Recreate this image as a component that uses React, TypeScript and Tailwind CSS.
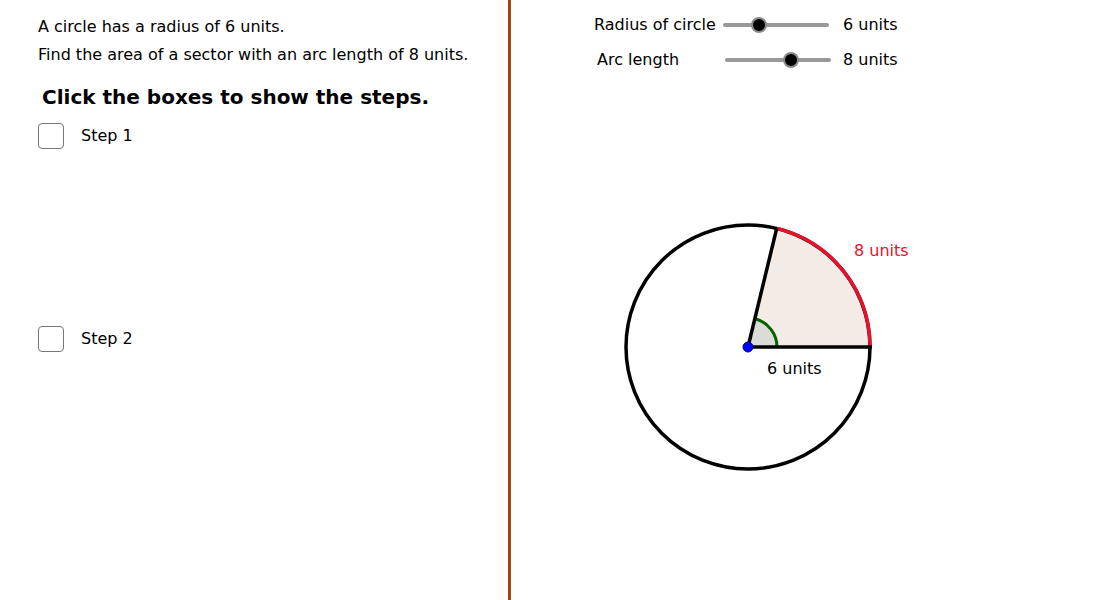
import React from "react";

const font = { fontFamily: '"DejaVu Sans", "Open Sans", sans-serif' };

function Slider({ pos }: { pos: number }) {
  return (
    <div className="relative w-[106px] h-[16px]">
      <div className="absolute left-0 right-0 top-[6px] h-[4px] rounded-full bg-[#999999]" />
      <div
        className="absolute top-[0px] w-[16px] h-[16px] rounded-full bg-black border-[2px] border-[#8a8a8a]"
        style={{ left: pos - 8 }}
      />
    </div>
  );
}

function Checkbox() {
  return <div className="w-[26px] h-[26px] rounded-[4px] border-[1.5px] border-[#777777] bg-white" />;
}

export default function App() {
  const cx = 749 - 512;
  const cy = 347;
  const r = 122;
  const theta = 8 / 6;
  const ex = cx + r * Math.cos(theta);
  const ey = cy - r * Math.sin(theta);
  const ar = 29;
  const ax = cx + ar * Math.cos(theta);
  const ay = cy - ar * Math.sin(theta);
  return (
    <div className="w-[1100px] h-[600px] bg-white flex text-black overflow-hidden" style={font}>
      <div className="w-[508px] h-full pl-[38px] pt-[13px] flex flex-col">
        <div className="text-[16px] leading-[28px]">A circle has a radius of 6 units.</div>
        <div className="text-[16px] leading-[28px]">Find the area of a sector with an arc length of 8 units.</div>
        <div className="text-[20px] font-bold leading-[28px] mt-[14px] pl-[4px]">Click the boxes to show the steps.</div>
        <div className="flex items-center gap-[17px] mt-[12px]">
          <Checkbox />
          <span className="text-[16px]">Step 1</span>
        </div>
        <div className="flex items-center gap-[17px] mt-[177px]">
          <Checkbox />
          <span className="text-[16px]">Step 2</span>
        </div>
      </div>
      <div className="w-[3px] h-full bg-[#a5440f]" />
      <div className="relative flex-1 h-full">
        <div className="absolute left-[83px] top-[14px] flex flex-col gap-[13px] text-[16px]">
          <div className="flex items-center h-[22px]">
            <span className="w-[129px]">Radius of circle</span>
            <Slider pos={36} />
            <span className="ml-[14px]">6 units</span>
          </div>
          <div className="flex items-center h-[22px]">
            <span className="w-[129px] pl-[3px]">Arc length</span>
            <div className="ml-[2px]">
              <Slider pos={66} />
            </div>
            <span className="ml-[12px]">8 units</span>
          </div>
        </div>
        <svg className="absolute left-0 top-0" width="588" height="600" viewBox="0 0 588 600">
          <path
            d={`M ${cx} ${cy} L ${cx + r} ${cy} A ${r} ${r} 0 0 0 ${ex} ${ey} Z`}
            fill="#f3ebe5"
          />
          <path
            d={`M ${cx} ${cy} L ${cx + ar} ${cy} A ${ar} ${ar} 0 0 0 ${ax} ${ay} Z`}
            fill="#dcdcd6"
          />
          <circle cx={cx} cy={cy} r={r} fill="none" stroke="black" strokeWidth="3.5" />
          <path
            d={`M ${cx + r} ${cy} A ${r} ${r} 0 0 0 ${ex} ${ey}`}
            fill="none"
            stroke="#e8112d"
            strokeWidth="3.5"
          />
          <path
            d={`M ${cx + ar} ${cy} A ${ar} ${ar} 0 0 0 ${ax} ${ay}`}
            fill="none"
            stroke="#006400"
            strokeWidth="3"
          />
          <line x1={cx} y1={cy} x2={cx + r + 2} y2={cy} stroke="black" strokeWidth="3.5" />
          <line x1={cx} y1={cy} x2={ex} y2={ey} stroke="black" strokeWidth="3.5" />
          <circle cx={cx} cy={cy} r="5" fill="#0000ff" stroke="#00007a" strokeWidth="1" />
          <text x={343} y={256} fontSize="16" fill="#e8112d" style={font}>8 units</text>
          <text x={256} y={374} fontSize="16" fill="black" style={font}>6 units</text>
        </svg>
      </div>
    </div>
  );
}
